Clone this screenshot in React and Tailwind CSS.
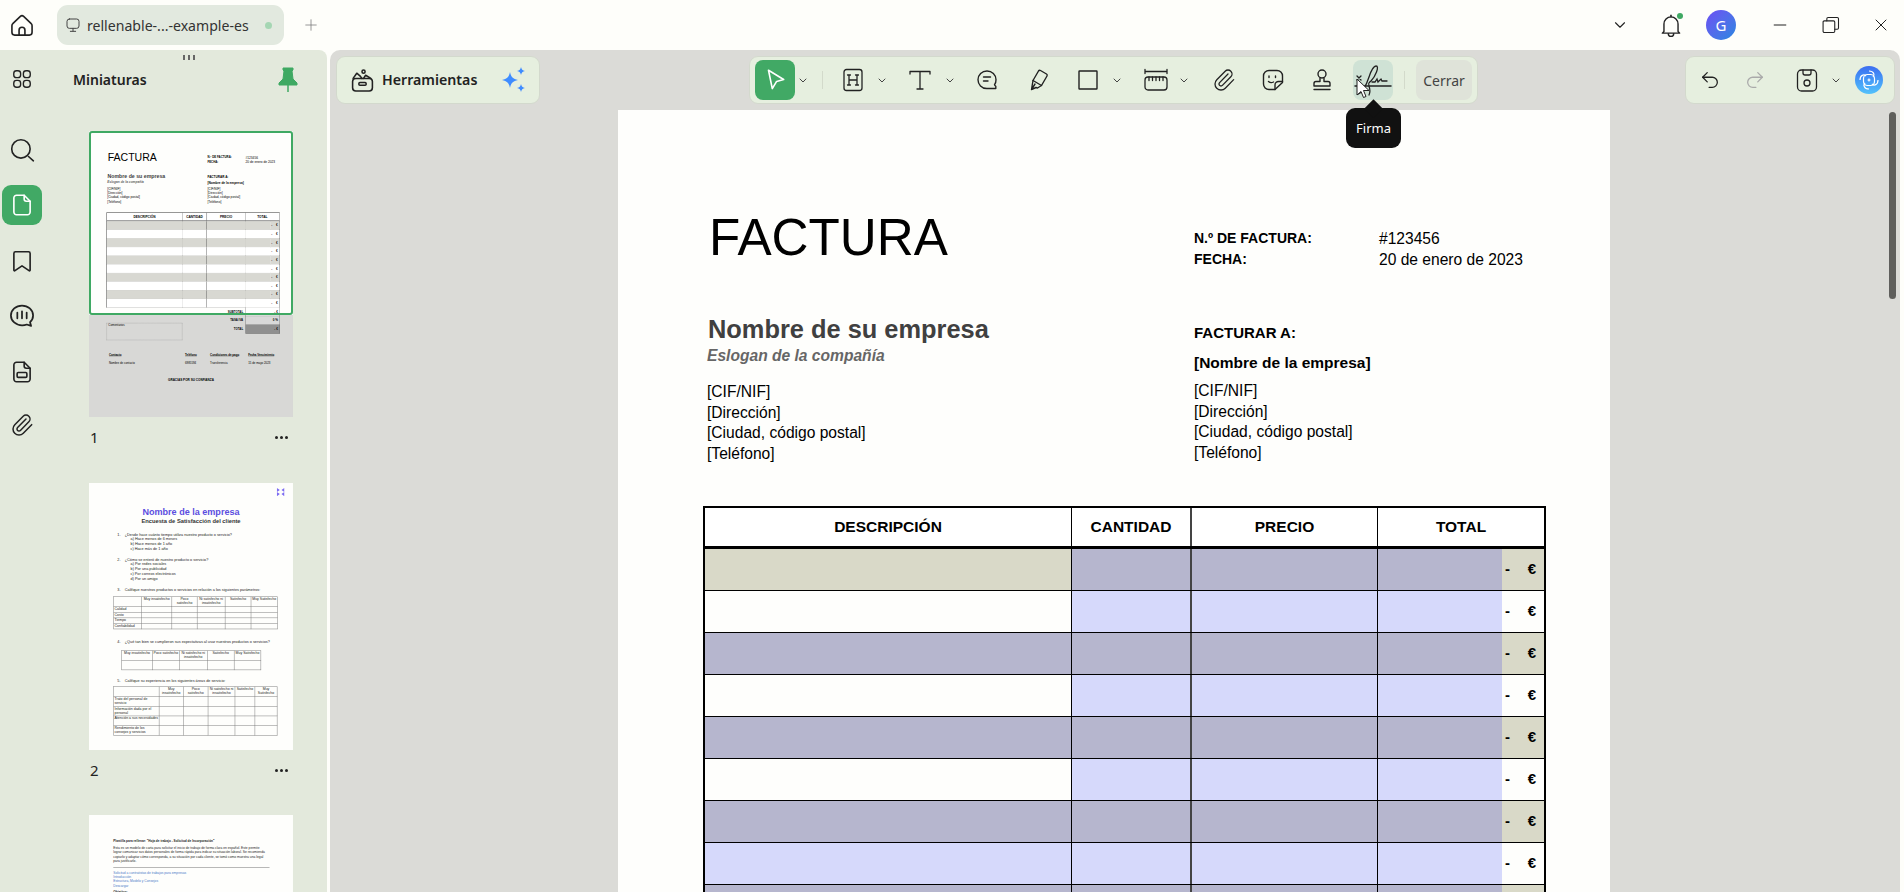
import { ChevronDown, Minus, Paperclip, Plus, Redo2, Undo2, X } from "lucide-react";

const Icon = ({ size = 24, box = "0 0 24 24", sw = 1.5, className = "text-[#222]", children }) => (
  <svg width={size} height={size} viewBox={box} fill="none" stroke="currentColor" strokeWidth={sw} strokeLinecap="round" strokeLinejoin="round" className={className}>
    {children}
  </svg>
);

const Chev = () => (
  <div className="w-3 flex justify-center shrink-0">
    <ChevronDown size={13} strokeWidth={2} className="text-[#444]" />
  </div>
);

const Sep = ({ className }) => <div className={`w-px h-[18px] bg-[#d3dacb] shrink-0 ${className}`} />;

// shared rows of the invoice table
const rows = [
  { shade: true, first: true },
  { shade: false },
  { shade: true },
  { shade: false },
  { shade: true },
  { shade: false },
  { shade: true },
  { shade: false, active: true },
  { shade: true },
  { shade: false },
];

const InvoiceRow = ({ row, live }) => {
  let desc = row.shade ? "bg-[#d8d8d2]" : "bg-white";
  let cell = desc;
  let amount = desc;
  if (live) {
    desc = row.first ? "bg-[#d9d9c8]" : row.shade ? "bg-[#b6b6ce]" : row.active ? "bg-[#d6d9fb]" : "bg-[#fefefc]";
    cell = row.shade ? "bg-[#b6b6ce]" : "bg-[#d6d9fb]";
    amount = row.shade ? "bg-[#d9d9c8]" : "bg-[#fefefc]";
  }
  return (
    <div className="grid grid-cols-[367px_120px_186px_1fr] h-[42px] border-b border-black">
      <div className={`${desc} border-r border-black`} />
      <div className={`${cell} border-r-2 border-[#444]`} />
      <div className={`${cell} border-r border-black`} />
      <div className="flex">
        <div className={`w-[124px] ${cell}`} />
        <div className={`flex-1 flex items-center justify-between pl-[3px] pr-[8px] text-[15px] font-bold ${amount}`}>
          <span>-</span>
          <span>€</span>
        </div>
      </div>
    </div>
  );
};

const SumRow = ({ label, value, dark }) => (
  <div className="grid grid-cols-[186px_1fr] h-[42px]">
    <div className="flex items-center justify-end pr-3 text-[14px] font-bold">{label}</div>
    <div className={`flex items-center justify-end pr-[8px] border border-t-0 border-black text-[15px] font-bold ${dark ? "bg-[#aaaaaa]" : "bg-white"}`}>{value}</div>
  </div>
);

const Invoice = ({ live }) => (
  <div className={`w-[992px] bg-[#fefefc] pt-[98px] text-black font-['Liberation_Sans',Arial,sans-serif] ${live ? "h-[786px]" : "h-[1391px]"}`}>
    <div className="grid grid-cols-[576px_1fr] h-[60px]">
      <div className="pl-[91px] text-[51.2px] leading-[60px]">FACTURA</div>
      <div className="pt-[20px] grid grid-cols-[185px_1fr] text-[14px] leading-[21px] font-bold">
        <span>N.º DE FACTURA:</span>
        <span className="text-[15.6px] font-normal">#123456</span>
        <span>FECHA:</span>
        <span className="text-[15.6px] font-normal">20 de enero de 2023</span>
      </div>
    </div>

    <div className="grid grid-cols-[576px_1fr] mt-[46px]">
      <div className="pl-[89px]">
        <div className="pl-[1px] text-[25.4px] leading-[30px] font-bold text-[#404040]">Nombre de su empresa</div>
        <div className="mt-[2px] text-[15.6px] leading-[20px] font-bold italic text-[#666]">Eslogan de la compañía</div>
        <div className="mt-[16px] text-[15.6px] leading-[20.7px]">
          <div>[CIF/NIF]</div>
          <div>[Dirección]</div>
          <div>[Ciudad, código postal]</div>
          <div>[Teléfono]</div>
        </div>
      </div>
      <div className="pt-[9px]">
        <div className="text-[15px] leading-[20px] font-bold">FACTURAR A:</div>
        <div className="mt-[10px] text-[15.5px] leading-[20px] font-bold">[Nombre de la empresa]</div>
        <div className="mt-[8px] text-[15.6px] leading-[20.7px]">
          <div>[CIF/NIF]</div>
          <div>[Dirección]</div>
          <div>[Ciudad, código postal]</div>
          <div>[Teléfono]</div>
        </div>
      </div>
    </div>

    <div className="ml-[85px] mt-[41px] w-[843px] border-x-2 border-black">
      <div className="grid grid-cols-[367px_120px_186px_1fr] h-[43px] pt-[2px] border-t-2 border-b-[3px] border-black bg-white text-[15.5px] font-bold text-center">
        <div className="flex items-center justify-center border-r border-black -mt-[2px]">DESCRIPCIÓN</div>
        <div className="flex items-center justify-center border-r-2 border-[#444] -mt-[2px]">CANTIDAD</div>
        <div className="flex items-center justify-center border-r border-black -mt-[2px]">PRECIO</div>
        <div className="flex items-center justify-center -mt-[2px]">TOTAL</div>
      </div>
      {rows.slice(0, live ? 9 : 10).map((row, i) => (
        <InvoiceRow key={i} row={row} live={live} />
      ))}
    </div>

    {!live && (
      <>
        <div className="ml-[85px] w-[843px] flex">
          <div className="w-[369px] pt-[75px]">
            <div className="h-[83px] border border-dashed border-[#555] px-2 text-[14px]">Comentarios</div>
          </div>
          <div className="w-[122px]" />
          <div className="flex-1">
            <SumRow label="SUBTOTAL" value="- €" />
            <SumRow label="TASA IVA" value="0 %" />
            <SumRow label="TOTAL" value="- €" dark />
          </div>
        </div>
        <div className="mt-[52px] ml-[97px] grid grid-cols-[370px_122px_185px_1fr] text-[14px] leading-[38px]">
          <span className="font-bold underline">Contacto</span>
          <span className="font-bold underline">Teléfono</span>
          <span className="font-bold underline">Condiciones de pago</span>
          <span className="font-bold underline">Fecha Vencimiento</span>
          <span>Nombre de contacto</span>
          <span>6985594</span>
          <span>Transferencia</span>
          <span>15 de mayo 2023</span>
        </div>
        <div className="mt-[55px] text-center text-[15px] font-bold">GRACIAS POR SU CONFIANZA</div>
      </>
    )}
  </div>
);

const SurveyTable = ({ widths, head, labels, rowH, left = "ml-[118px]" }) => (
  <div className={`${left} border-t-2 border-l-2 border-[#666] w-fit text-[17px] leading-[20px] text-center`}>
    <div className="flex h-[49px]">
      {head.map((h, i) => (
        <div key={i} className="border-r-2 border-b-2 border-[#666] px-1" style={{ width: widths[i] }}>{h}</div>
      ))}
    </div>
    {labels.map((l, r) => (
      <div key={r} className="flex" style={{ height: rowH }}>
        {widths.map((w, i) => (
          <div key={i} className="border-r-2 border-b-2 border-[#666] text-left px-1" style={{ width: w }}>{i === 0 ? l : ""}</div>
        ))}
      </div>
    ))}
  </div>
);

const scaleHead = ["Muy insatisfecho", "Poco satisfecho", "Ni satisfecho ni insatisfecho", "Satisfecho", "Muy Satisfecho"];

const Survey = () => (
  <div className="w-[992px] h-[1300px] bg-[#fefefc] pt-[22px] text-[#222] font-['Liberation_Sans',Arial,sans-serif]">
    <div className="flex justify-end pr-[40px] h-[44px]">
      <svg width="40" height="44" viewBox="0 0 40 44" fill="#7c6cf2">
        <path d="M2 2l14 10-14 10zM38 2L24 12l14 10zM2 42l14-10L2 22zM38 42L24 32l14-10z" />
      </svg>
    </div>
    <div className="mt-[50px] text-center text-[44px] leading-[50px] font-bold text-[#5b4de0]">Nombre de la empresa</div>
    <div className="text-center text-[28px] leading-[36px] font-bold text-[#333]">Encuesta de Satisfacción del cliente</div>
    <div className="mt-[36px] pl-[138px] pr-[90px] text-[18.5px] leading-[23px]">
      <div>1.&nbsp;&nbsp;&nbsp;&nbsp;¿Desde hace cuánto tiempo utiliza nuestro producto o servicio?</div>
      <div className="pl-[64px]">a) Hace menos de 6 meses</div>
      <div className="pl-[64px]">b) Hace menos de 1 año</div>
      <div className="pl-[64px]">c) Hace más de 1 año</div>
      <div className="mt-[30px]">2.&nbsp;&nbsp;&nbsp;&nbsp;¿Cómo se enteró de nuestro producto o servicio?</div>
      <div className="pl-[64px]">a) Por redes sociales</div>
      <div className="pl-[64px]">b) Por una publicidad</div>
      <div className="pl-[64px]">c) Por correos electrónicos</div>
      <div className="pl-[64px]">d) Por un amigo</div>
      <div className="mt-[30px] whitespace-nowrap">3.&nbsp;&nbsp;&nbsp;&nbsp;Califique nuestros productos o servicios en relación a los siguientes parámetros:</div>
    </div>
    <div className="mt-[24px]">
      <SurveyTable widths={[136, 148, 123, 136, 126, 128]} head={["", ...scaleHead]} labels={["Calidad", "Costo", "Tiempo", "Confiabilidad"]} rowH={27} />
    </div>
    <div className="mt-[50px] pl-[138px] pr-[110px] text-[18.5px] leading-[23px]">
      4.&nbsp;&nbsp;&nbsp;&nbsp;¿Qué tan bien se cumplieron sus expectativas al usar nuestros productos o servicios?
    </div>
    <div className="mt-[30px]">
      <SurveyTable widths={[151, 130, 136, 131, 130]} head={scaleHead} labels={[""]} rowH={45} left="ml-[157px]" />
    </div>
    <div className="mt-[38px] pl-[138px] text-[18.5px] leading-[23px]">
      5.&nbsp;&nbsp;&nbsp;&nbsp;Califique su experiencia en los siguientes áreas de servicio:
    </div>
    <div className="mt-[18px]">
      <SurveyTable
        widths={[222, 118, 120, 131, 97, 108]}
        head={["", ...scaleHead]}
        labels={["Trato del personal de servicio", "Información dada por el personal", "Atención a sus necesidades", "Rendimiento de los consejos y servicios"]}
        rowH={47}
      />
    </div>
  </div>
);

const Letter = () => (
  <div className="w-[992px] h-[375px] bg-[#fefefc] pt-[115px] px-[118px] text-[#222] font-['Liberation_Sans',Arial,sans-serif]">
    <div className="text-[15.2px] leading-[22px] font-bold">Plantilla para rellenar: "Hoja de trabajo - Solicitud de Incorporación"</div>
    <p className="mt-[12px] w-[750px] text-[16px] leading-[22px]">
      Esta es un modelo de carta para solicitar el inicio de trabajo de forma clara en español. Este permite lograr comunicar sus datos personales de forma rápida para indicar su situación laboral. Se recomienda copiarlo y adaptar cómo corresponda, a su situación por cada cliente, se tomó como muestra una legal para justificarlo.
    </p>
    <div className="mt-[18px] w-[760px] border-t-2 border-[#555]" />
    <div className="mt-[14px] text-[16px] leading-[20.5px] text-[#4a78c8]">
      <div>Solicitud a contratistas de trabajos para empresas</div>
      <div>Introducción</div>
      <div>Estructura, Modelo y Consejos</div>
      <div>Descargar</div>
    </div>
    <div className="mt-[12px] text-[16px] leading-[18px] font-bold">Objetivo:</div>
  </div>
);

const Thumb = ({ h, overlay, children }) => (
  <div className={`relative w-[204px] ${h} overflow-hidden`}>
    <div className="origin-top-left scale-[0.2056]">{children}</div>
    {overlay}
  </div>
);

const ThumbLabel = ({ n }) => (
  <div className="w-[204px] h-[40px] flex items-center justify-between pl-[1px] pr-[5px] font-['Noto_Sans',sans-serif] text-[15px] text-[#222]">
    <span>{n}</span>
    <div className="flex gap-[2px]">
      <span className="w-[3px] h-[3px] rounded-full bg-[#222]" />
      <span className="w-[3px] h-[3px] rounded-full bg-[#222]" />
      <span className="w-[3px] h-[3px] rounded-full bg-[#222]" />
    </div>
  </div>
);

const Sidebar = () => (
  <div className="w-[327px] shrink-0 bg-[#e3e9dc] rounded-tr-[8px] flex overflow-hidden relative">
    <div className="w-[44px] shrink-0 flex flex-col items-center pt-[18px]">
      <Icon size={22}>
        <rect x="3" y="3" width="7.5" height="7.5" rx="3" />
        <rect x="13.5" y="3" width="7.5" height="7.5" rx="3" />
        <rect x="3" y="13.5" width="7.5" height="7.5" rx="3" />
        <rect x="13.5" y="13.5" width="7.5" height="7.5" rx="3" />
      </Icon>
      <div className="mt-[47px]">
        <Icon size={26}>
          <circle cx="11" cy="11" r="8.5" />
          <path d="M18 18l4.5 4" />
        </Icon>
      </div>
      <div className="mt-[22px] w-[40px] h-[40px] rounded-[9px] bg-[#41a965] flex items-center justify-center">
        <Icon size={26} className="text-white">
          <path d="M14 3H7a2.5 2.5 0 0 0-2.5 2.5v13A2.5 2.5 0 0 0 7 21h10a2.5 2.5 0 0 0 2.5-2.5V8.5z" />
          <path d="M14 3v3.5a2 2 0 0 0 2 2h3.5" />
        </Icon>
      </div>
      <div className="mt-[23px]">
        <Icon size={26}>
          <path d="M6 3.5h12a1.5 1.5 0 0 1 1.5 1.5v15.5a.6.6 0 0 1-1 .4L12 16.5l-6.500 4.400a.6.6 0 0 1-1-.4V5A1.500 1.500 0 0 1 6 3.500z" />
        </Icon>
      </div>
      <div className="mt-[28px]">
        <Icon size={28}>
          <path d="M12 3c5.200 0 9.500 3.800 9.500 8.500 0 2.300-1 4.300-2.600 5.800l.9 3.200-3.700-1.200A10.400 10.400 0 0 1 12 20C6.800 20 2.500 16.200 2.500 11.500S6.800 3 12 3z" />
          <path d="M8 9v5M12 8v6M16 9v5" />
        </Icon>
      </div>
      <div className="mt-[29px]">
        <Icon size={26}>
          <path d="M14 3H7a2.500 2.500 0 0 0-2.500 2.500v13A2.500 2.500 0 0 0 7 21h10a2.500 2.500 0 0 0 2.500-2.500V8.500z" />
          <path d="M14 3v3.500a2 2 0 0 0 2 2h3.500" />
          <rect x="7.500" y="12.500" width="9" height="4.500" rx="1" />
        </Icon>
      </div>
      <div className="mt-[28px]">
        <Paperclip size={24} strokeWidth={1.5} className="text-[#222]" />
      </div>
    </div>

    <div className="flex-1 min-w-0">
      <div className="flex justify-center gap-[3px] pl-[7px] pt-[5px] h-[7px]">
        <span className="w-[2px] h-[5px] bg-[#666]" />
        <span className="w-[2px] h-[5px] bg-[#666]" />
        <span className="w-[2px] h-[5px] bg-[#666]" />
      </div>
      <div className="flex items-center justify-between pl-[29px] pr-[29px] h-[46px] -mt-[1px]">
        <span className="font-['Noto_Sans',sans-serif] font-semibold text-[14px] text-[#222]">Miniaturas</span>
        <svg width="20" height="26" viewBox="0 0 20 26" fill="#3fa963" stroke="#3fa963">
          <path d="M5 2h10v2l-1 1 1 8 4 4v2H1v-2l4-4 1-8-1-1z" />
          <path d="M10 19v7" strokeWidth="1.500" />
        </svg>
      </div>
      <div className="pl-[45px] pt-[29px]">
        <Thumb
          h="h-[286px]"
          overlay={
            <>
              <div className="absolute left-0 right-0 top-[184px] bottom-0 bg-black/15" />
              <div className="absolute left-0 right-0 top-0 h-[184px] border-[2.5px] border-[#3fa963] rounded-[3px]" />
            </>
          }
        >
          <Invoice />
        </Thumb>
        <ThumbLabel n="1" />
        <div className="mt-[26px]">
          <Thumb h="h-[267px]">
            <Survey />
          </Thumb>
        </div>
        <ThumbLabel n="2" />
        <div className="mt-[25px]">
          <Thumb h="h-[77px]">
            <Letter />
          </Thumb>
        </div>
      </div>
    </div>
  </div>
);

const TitleBar = () => (
  <div className="h-[50px] shrink-0 flex items-center text-[#222] font-['Noto_Sans',sans-serif]">
    <div className="ml-[9px] w-[26px] flex justify-center">
      <Icon size={26}>
        <path d="M3.500 10.800 10.500 4a2.200 2.200 0 0 1 3 0l7 6.800a2.500 2.500 0 0 1 .8 1.800v6.200A2.500 2.500 0 0 1 18.800 21.300H5.200a2.500 2.500 0 0 1-2.500-2.500v-6.200a2.500 2.500 0 0 1 .8-1.800z" />
        <path d="M9.300 21.300v-4.500a2.700 2.700 0 0 1 5.400 0v4.500" />
      </Icon>
    </div>
    <div className="ml-[22px] w-[227px] h-[40px] rounded-[11px] bg-[#e2e9df] flex items-center pl-[8px]">
      <Icon size={16} className="text-[#444]">
        <rect x="3" y="3" width="18" height="14" rx="3.500" />
        <path d="M12 17v4M8 21.500h8" />
      </Icon>
      <span className="ml-[6px] pt-[1px] text-[14.100px] text-[#333] whitespace-nowrap">rellenable-...-example-es</span>
      <span className="ml-[16px] w-[7px] h-[7px] rounded-full bg-[#a5d6b3]" />
    </div>
    <div className="ml-[18px]">
      <Plus size={18} strokeWidth={1} className="text-[#777]" />
    </div>
    <div className="ml-auto flex items-center">
      <ChevronDown size={18} strokeWidth={1.500} className="text-[#222]" />
      <div className="relative ml-[29px]">
        <Icon size={26} sw={1.300}>
          <path d="M5.500 18V11a6.500 6.500 0 0 1 13 0v7l1.500 1.500H4z" />
          <path d="M9.500 20a2.500 2.500 0 0 0 5 0" />
          <path d="M12 3v1.500" />
        </Icon>
        <span className="absolute right-[1px] top-[1px] w-[6px] h-[6px] rounded-full bg-[#3fa963]" />
      </div>
      <div className="ml-[22px] w-[30px] h-[30px] rounded-full bg-gradient-to-br from-[#6a4df4] to-[#1f86e0] text-white text-[15px] flex items-center justify-center">G</div>
      <div className="ml-[34px]">
        <Minus size={20} strokeWidth={1.200} className="text-[#222]" />
      </div>
      <div className="ml-[31px]">
        <Icon size={20} sw={1.300}>
          <rect x="2.500" y="7" width="14" height="14" rx="1.500" />
          <path d="M7 7V4.500A1.500 1.500 0 0 1 8.500 3h11A1.500 1.500 0 0 1 21 4.500v11a1.500 1.500 0 0 1-1.500 1.500h-3" />
        </Icon>
      </div>
      <div className="ml-[30px] mr-[13px]">
        <X size={20} strokeWidth={1.200} className="text-[#222]" />
      </div>
    </div>
  </div>
);

const Pill = ({ className, children }) => (
  <div className={`h-[48px] rounded-[9px] bg-[#e6efdf] border border-[#d3d9cd] flex items-center shrink-0 ${className}`}>{children}</div>
);

const ToolBar = () => (
  <div className="flex pt-[6px]">
    <Pill className="ml-[6px] w-[204px] pl-[13px]">
      <Icon size={25}>
        <rect x="2.500" y="10" width="19" height="12" rx="3" />
        <rect x="8.500" y="14" width="7" height="2.500" rx="1" />
        <path d="M3 10l3.500-5 3 2.500 2 2.500M13 10l2-3 5 3" />
        <circle cx="13" cy="3.500" r="1.500" />
      </Icon>
      <span className="ml-[7px] font-['Noto_Sans',sans-serif] font-semibold text-[14.200px] text-[#222]">Herramientas</span>
      <div className="ml-[23px]">
        <svg width="28" height="28" viewBox="0 0 28 28" fill="#3f8cff">
          <path d="M10 6c1 5 3 7 8 8-5 1-7 3-8 8-1-5-3-7-8-8 5-1 7-3 8-8z" />
          <path d="M21 1c.5 2.500 1.500 3.500 4 4-2.500.5-3.500 1.500-4 4-.5-2.500-1.500-3.500-4-4 2.500-.5 3.500-1.500 4-4z" />
          <path d="M21 18c.5 2.500 1.500 3.500 4 4-2.500.5-3.500 1.500-4 4-.5-2.500-1.500-3.500-4-4 2.500-.5 3.500-1.500 4-4z" />
        </svg>
      </div>
    </Pill>

    <Pill className="ml-[209px] w-[729px] pl-[5px]">
      <div className="w-[40px] h-[40px] rounded-[8px] bg-[#41a965] flex items-center justify-center shrink-0">
        <Icon size={26} className="text-white">
          <path d="M6 3l14 8.500-6.500 1.800L9.500 20z" />
        </Icon>
      </div>
      <div className="ml-[2px]"><Chev /></div>
      <Sep className="ml-[13px]" />
      <div className="ml-[18px]">
        <Icon size={24} sw={1.300}>
          <rect x="3" y="1.500" width="18" height="21" rx="2.500" />
          <path d="M8 7v10M16 7v10M8 12h8M6.500 7h3M14.500 7h3M6.500 17h3M14.500 17h3" />
        </Icon>
      </div>
      <div className="ml-[11px]"><Chev /></div>
      <div className="ml-[20px]">
        <Icon size={24} sw={1.300}>
          <path d="M2 6V3.500h20V6M12 3.500V21M9 21h6" />
        </Icon>
      </div>
      <div className="ml-[12px]"><Chev /></div>
      <div className="ml-[19px]">
        <Icon size={24} sw={1.400}>
          <path d="M12 3c-5 0-9 3.800-9 8.700 0 4.800 3.700 8.800 8.800 8.800h9v-2.200c-.8-.5-1.200-1-1.300-1.600 1.300-1.400 1.500-3.200 1.500-5C21 6.800 17 3 12 3z" />
          <path d="M8.500 9h7M8.500 13h4.500" />
        </Icon>
      </div>
      <div className="ml-[28px]">
        <Icon size={24} sw={1.400}>
          <path d="M13.500 2.500l6 3.500a1.500 1.500 0 0 1 .5 2L14.500 17.500l-8.500-5L11.500 3a1.500 1.500 0 0 1 2-.5z" />
          <path d="M6 12.500L4.500 21.500l4.500-2 1.500 0.500 4-2.500M4.500 21.500L8 16" />
        </Icon>
      </div>
      <div className="ml-[25px]">
        <Icon size={24} sw={1.400}>
          <rect x="3" y="3" width="18" height="18" rx="0.500" />
        </Icon>
      </div>
      <div className="ml-[11px]"><Chev /></div>
      <div className="ml-[21px]">
        <Icon size={24} sw={1.300}>
          <path d="M1 1.500v4M23 1.500v4M1 3.500h22" />
          <rect x="1" y="9" width="22" height="13" rx="3" />
          <path d="M5 9v3.500M8.500 9v3.500M12 9v3.500M15.500 9v3.500M19 9v3.500" />
        </Icon>
      </div>
      <div className="ml-[10px]"><Chev /></div>
      <div className="ml-[22px]">
        <Paperclip size={24} strokeWidth={1.300} className="text-[#222]" />
      </div>
      <div className="ml-[25px]">
        <Icon size={24} sw={1.400}>
          <path d="M8 2.500h8A5.500 5.500 0 0 1 21.500 8v6.500L14 21.500H8A5.500 5.500 0 0 1 2.500 16V8A5.500 5.500 0 0 1 8 2.500z" />
          <path d="M21.500 13.500h-4a3.500 3.500 0 0 0-3.500 3.500v4.500M8 8v1.500M14.500 8v1.500M7.500 13.500c1.500 1.300 3.500 1.300 5 .5" />
        </Icon>
      </div>
      <div className="ml-[25px]">
        <Icon size={24} sw={1.400}>
          <circle cx="12" cy="6" r="4" />
          <path d="M10 10v3.500H6a2 2 0 0 0-2 2V18h16v-2.500a2 2 0 0 0-2-2h-4V10M4 21.500h16" />
        </Icon>
      </div>
      <div className="relative ml-[19px] w-[40px] h-[40px] rounded-[8px] bg-[#cfe2d5] flex items-center justify-center shrink-0">
        <svg width="40" height="36" viewBox="0 0 40 36" fill="none" stroke="#222" strokeWidth="1.300" strokeLinecap="round">
          <path d="M4 14l4 4M8 14l-4 4" />
          <path d="M5 32c4-1 8-8 11-17 2-6 4-11 7-11 4 0-1 11-5 15-2 2-3 1-2 5 1 3 1 7 0 9" />
          <path d="M19 20h3l2-3 1 3 3-3 1 2h5" />
          <path d="M2 24h36" strokeWidth="1.500" />
        </svg>
        <div className="absolute left-[-7px] top-[48px] w-[55px] h-[40px] pt-[2px] rounded-[9px] bg-[#111] text-white text-[13px] font-['Noto_Sans',sans-serif] flex items-center justify-center z-20">
          <div className="absolute left-[21px] top-[-6px] w-[13px] h-[13px] rotate-45 bg-[#111]" />
          <span className="relative">Firma</span>
        </div>
        <svg width="14" height="22" viewBox="0 0 14 22" className="absolute left-[3px] top-[18px] z-30" fill="#fff" stroke="#222" strokeWidth="1">
          <path d="M1 1v16l4-3.500 2.500 6 2.500-1-2.500-6H13z" />
        </svg>
      </div>
      <Sep className="ml-[11px]" />
      <div className="ml-[11px] w-[56px] h-[40px] rounded-[8px] bg-[#dfe3d9] flex items-center justify-center font-['Noto_Sans',sans-serif] text-[14px] text-[#444]">Cerrar</div>
    </Pill>

    <Pill className="ml-[207px] w-[210px] pl-[13px]">
      <Undo2 size={22} strokeWidth={1.400} className="text-[#222]" />
      <div className="ml-[23px]">
        <Redo2 size={22} strokeWidth={1.400} className="text-[#aaa]" />
      </div>
      <div className="ml-[29px]">
        <Icon size={24} sw={1.300}>
          <rect x="2.500" y="2" width="19" height="21" rx="4" />
          <path d="M8 2v3a2 2 0 0 0 2 2h4a2 2 0 0 0 2-2V2" />
          <circle cx="12" cy="15" r="3" />
        </Icon>
      </div>
      <div className="ml-[11px]"><Chev /></div>
      <div className="ml-[13px] w-[28px] h-[28px] rounded-full bg-gradient-to-b from-[#3d6df0] to-[#54c2fb] flex items-center justify-center">
        <svg width="20" height="20" viewBox="0 0 20 20" fill="none" stroke="#fff" strokeWidth="1.200">
          <path d="M10 1c5 0 6 4 4 6M19 10c0 5-4 6-6 4M10 19c-5 0-6-4-4-6M1 10c0-5 4-6 6-4" />
          <rect x="4.500" y="4.500" width="11" height="11" rx="4" />
          <path d="M10 8.500v3M8.500 10h3" />
        </svg>
      </div>
    </Pill>
  </div>
);

export default function App() {
  return (
    <div className="w-[1904px] h-[892px] overflow-hidden bg-[#fefefa] flex flex-col">
      <TitleBar />
      <div className="flex flex-1 min-h-0">
        <Sidebar />
        <div className="ml-[3px] w-[1570px] bg-[#dbdbd7] rounded-t-[10px] relative overflow-hidden">
          <div className="relative z-10">
            <ToolBar />
          </div>
          <div className="pl-[288px] mt-[6px]">
            <Invoice live />
          </div>
          <div className="absolute right-[4px] top-[62px] w-[7px] h-[187px] rounded-full bg-[#5f5f5c]" />
        </div>
      </div>
    </div>
  );
}
